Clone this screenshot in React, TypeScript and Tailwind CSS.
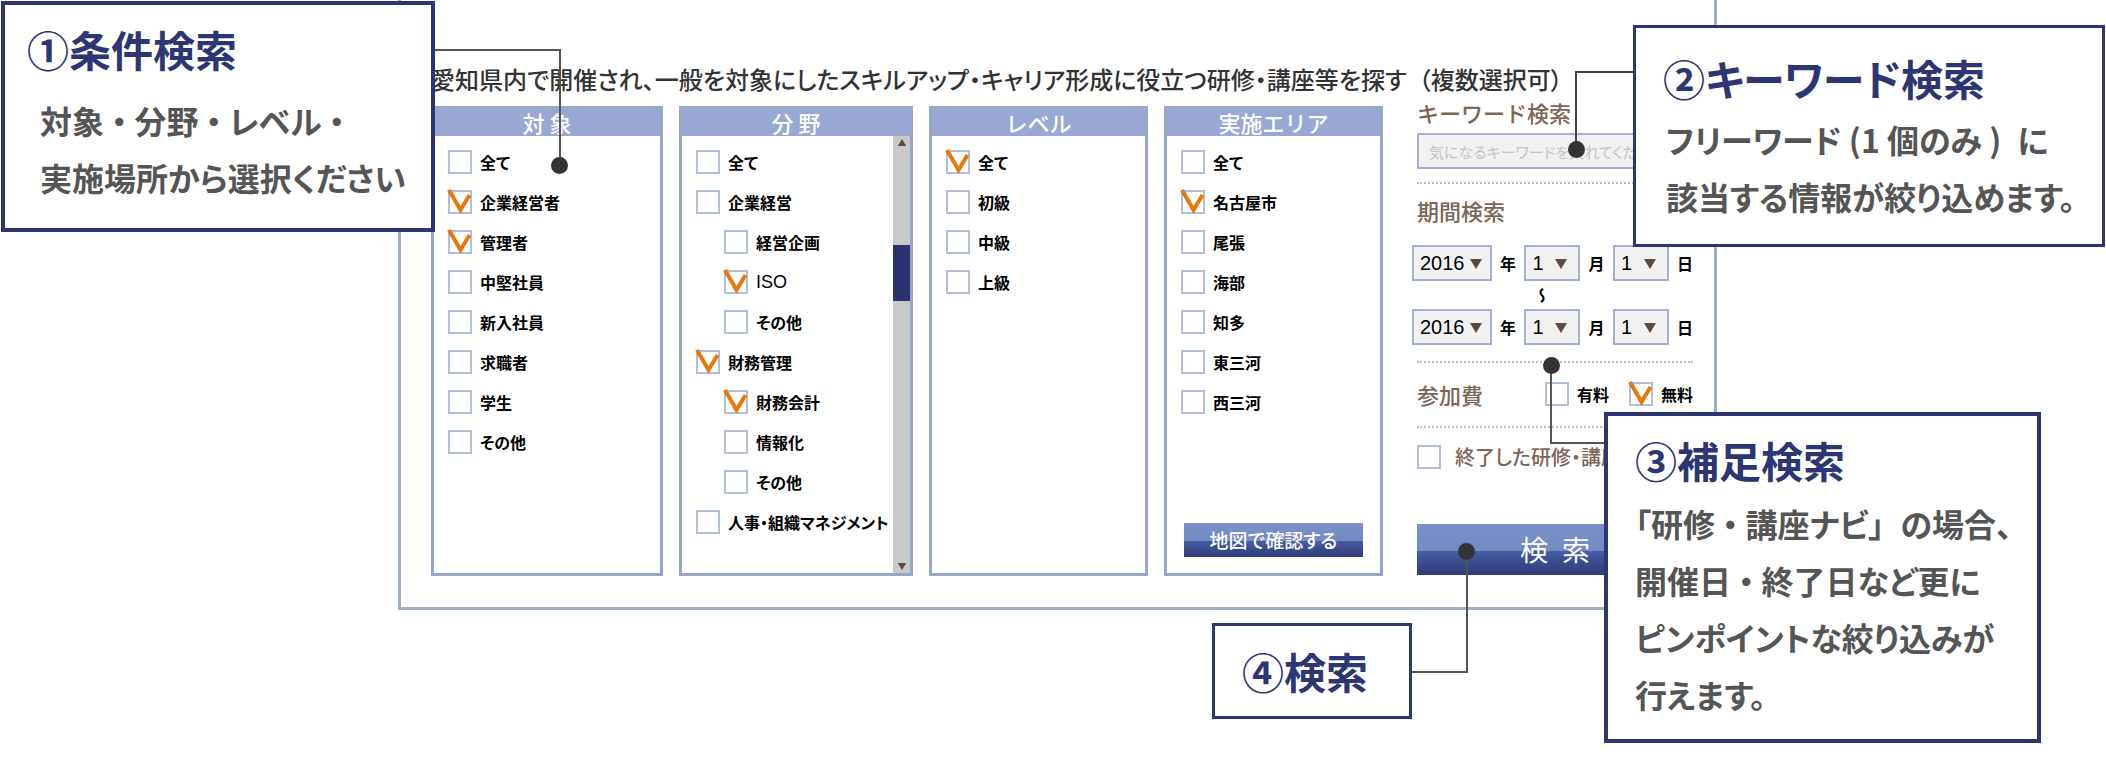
import React from "react";
import clsx from "clsx";

type Option = {
  label: string;
  checked?: boolean;
  child?: boolean;
};

const targets: Option[] = [
  { label: "全て" },
  { label: "企業経営者", checked: true },
  { label: "管理者", checked: true },
  { label: "中堅社員" },
  { label: "新入社員" },
  { label: "求職者" },
  { label: "学生" },
  { label: "その他" },
];

const fields: Option[] = [
  { label: "全て" },
  { label: "企業経営" },
  { label: "経営企画", child: true },
  { label: "ISO", child: true, checked: true },
  { label: "その他", child: true },
  { label: "財務管理", checked: true },
  { label: "財務会計", child: true, checked: true },
  { label: "情報化", child: true },
  { label: "その他", child: true },
  { label: "人事・組織マネジメント" },
];

const levels: Option[] = [
  { label: "全て", checked: true },
  { label: "初級" },
  { label: "中級" },
  { label: "上級" },
];

const areas: Option[] = [
  { label: "全て" },
  { label: "名古屋市", checked: true },
  { label: "尾張" },
  { label: "海部" },
  { label: "知多" },
  { label: "東三河" },
  { label: "西三河" },
];

const CheckItem: React.FC<{
  label: string;
  checked?: boolean;
  className?: string;
}> = ({ label, checked, className }) => (
  <label className={clsx("flex items-center whitespace-nowrap", className)}>
    <span className="relative block size-6 shrink-0">
      <input
        type="checkbox"
        defaultChecked={checked}
        className="peer block size-6 appearance-none border-2 border-[#b3bfda] bg-white"
      />
      <svg
        viewBox="0 0 24 24"
        className="pointer-events-none absolute inset-0 hidden size-6 overflow-visible peer-checked:block"
        fill="none"
        stroke="#e8780c"
        strokeWidth="4"
      >
        <path d="M1 0 L12.5 20 L21.5 5" />
      </svg>
    </span>
    {label}
  </label>
);

const OptionList: React.FC<{ options: Option[] }> = ({ options }) => (
  <ul className="min-w-0 pt-[6px] pl-[14px] text-[16px] font-bold text-black">
    {options.map((option, index) => (
      <li key={index} className={clsx("flex h-10 items-center", option.child && "pl-7")}>
        <CheckItem
          label={option.label}
          checked={option.checked}
          className={clsx("gap-2", option.label === "ISO" && "font-['Liberation_Sans'] text-[18px] font-normal")}
        />
      </li>
    ))}
  </ul>
);

const Column: React.FC<{ title: string; children: React.ReactNode }> = ({ title, children }) => (
  <section className="flex h-[470px] min-w-0 flex-col border-3 border-[#98a7c8] bg-white">
    <h2 className="h-[27px] shrink-0 bg-[#98a7d4] text-center text-[22px] leading-[27px] font-medium text-white [font-feature-settings:normal]">
      {title}
    </h2>
    {children}
  </section>
);

const Triangle: React.FC<{ up?: boolean; className?: string }> = ({ up, className }) => (
  <svg viewBox="0 0 12 10" className={className} fill="#5c4a42">
    <path d={up ? "M0 10 L6 0 L12 10 Z" : "M0 0 L12 0 L6 10 Z"} />
  </svg>
);

const DateSelect: React.FC<{ name: string; value: string; unit: string; wide?: boolean }> = ({
  name,
  value,
  unit,
  wide,
}) => (
  <label className="flex items-center gap-2 text-[16px] font-bold text-black">
    <span className={clsx("relative block", wide ? "w-20" : "w-14")}>
      <select
        name={name}
        defaultValue={value}
        className="block h-9 w-full appearance-none border-2 border-[#a3b0d0] bg-[#f1f1f1] pl-[6px] font-['Liberation_Sans'] text-[20px] font-normal"
      >
        <option>{value}</option>
      </select>
      <Triangle
        className={clsx("pointer-events-none absolute top-[14px] h-[10px] w-3", wide ? "right-[10px]" : "right-[13px]")}
      />
    </span>
    {unit}
  </label>
);

const DateRow: React.FC<{ name: string }> = ({ name }) => (
  <div className="-ml-[5px] flex justify-between">
    <DateSelect name={`${name}-year`} value="2016" unit="年" wide />
    <DateSelect name={`${name}-month`} value="1" unit="月" />
    <DateSelect name={`${name}-day`} value="1" unit="日" />
  </div>
);

const Divider: React.FC<{ className?: string }> = ({ className }) => (
  <hr className={clsx("border-t-2 border-dotted border-[#bdbdbd]", className)} />
);

const Callout: React.FC<{ title: string; className?: string; children?: React.ReactNode }> = ({
  title,
  className,
  children,
}) => (
  <aside className={clsx("absolute border-[#2e3573] bg-white", className)}>
    <h3 className="text-[42px] leading-[60px] font-bold whitespace-nowrap text-[#2e3573]">{title}</h3>
    {children}
  </aside>
);

const Dot: React.FC<{ className?: string }> = ({ className }) => (
  <span className={clsx("absolute size-[17px] rounded-full bg-[#333]", className)} />
);

const buttonFill =
  "bg-[linear-gradient(to_bottom,#7a90c9_0%,#748ac2_52%,#445ca4_54%,#323976_100%)] text-white";

const calloutText = "text-[32px] leading-[57px] font-bold whitespace-nowrap text-[#555]";

const App: React.FC = () => {
  return (
    <div className="relative min-h-screen overflow-hidden bg-white font-['Noto_Sans_CJK_JP',sans-serif] [font-feature-settings:'palt']">
      <main className="mr-[389px] ml-[398px] border-3 border-t-0 border-[#a0adca] pt-[61px] pr-[21px] pb-[31px] pl-[30px]">
        <h1 className="text-[24px] leading-9 font-medium whitespace-nowrap text-[#333]">
          愛知県内で開催され、一般を対象にしたスキルアップ・キャリア形成に役立つ研修・講座等を探す&ensp;（複数選択可）
        </h1>

        <form className="flex gap-[34px]" onSubmit={(e) => e.preventDefault()}>
          <div className="grid min-w-0 flex-1 grid-cols-[minmax(0,232fr)_minmax(0,234fr)_minmax(0,219fr)_minmax(0,219fr)] gap-4 pt-[9px]">
            <Column title="対 象">
              <OptionList options={targets} />
            </Column>

            <Column title="分 野">
              <div className="flex flex-1 justify-between">
                <OptionList options={fields} />
                <div className="relative flex w-[17px] shrink-0 flex-col items-center justify-between bg-[#c9c9c9] py-[3px]">
                  <Triangle up className="h-[7px] w-3" />
                  <span className="absolute top-[109px] h-14 w-[17px] bg-[#2c3270]" />
                  <Triangle className="h-[7px] w-3" />
                </div>
              </div>
            </Column>

            <Column title="レベル">
              <OptionList options={levels} />
            </Column>

            <Column title="実施エリア">
              <OptionList options={areas} />
              <button
                type="button"
                className={clsx("mx-[17px] mt-auto mb-4 h-[34px] text-[19px] leading-[34px] font-medium", buttonFill)}
              >
                地図で確認する
              </button>
            </Column>
          </div>

          <div className="w-[276px] shrink-0 text-[22px] text-[#7b6657]">
            <label
              htmlFor="keyword"
              className="block leading-[30px] font-medium [font-feature-settings:normal]"
            >
              キーワード検索
            </label>
            <input
              id="keyword"
              type="text"
              placeholder="気になるキーワードを入れてください"
              className="mt-[6px] block h-9 w-full border-2 border-[#a3b0d0] bg-[#f1f1f1] px-[10px] text-[15px] placeholder:text-[#c4c4c4]"
            />
            <Divider className="mt-[13px]" />

            <h2 className="mt-[11px] leading-[30px] font-medium [font-feature-settings:normal]">期間検索</h2>
            <div className="mt-5">
              <DateRow name="from" />
              <div className="flex h-7 items-center justify-center text-[16px] font-bold text-black">
                <span className="mr-[26px] [writing-mode:vertical-rl]">〜</span>
              </div>
              <DateRow name="to" />
            </div>
            <Divider className="mt-4" />

            <fieldset className="mt-[19px] flex h-6 items-center justify-between">
              <legend className="float-left leading-6 font-medium">参加費</legend>
              <div className="ml-auto flex gap-5 text-[16px] font-bold text-black">
                <CheckItem label="有料" className="gap-2" />
                <CheckItem label="無料" checked className="gap-2" />
              </div>
            </fieldset>
            <Divider className="mt-5" />

            <CheckItem
              label="終了した研修・講座も表示"
              className="mt-[17px] h-6 gap-[14px] text-[20px] leading-6 font-medium"
            />
            <button
              type="submit"
              className={clsx("mt-[55px] block h-[51px] w-full text-[28px] leading-[51px]", buttonFill)}
            >
              検&ensp;索
            </button>
          </div>
        </form>
      </main>

      {/* connector lines */}
      <div className="absolute top-[49px] left-[434px] h-[116px] w-[127px] border-t-2 border-r-2 border-[#555]">
        <Dot className="-right-[9px] -bottom-[9px]" />
      </div>
      <div className="absolute top-[71px] right-[472px] h-[78px] w-[59px] border-t-2 border-l-2 border-[#444]">
        <Dot className="-bottom-[9px] -left-[9px]" />
      </div>
      <div className="absolute top-[366px] right-[501px] h-[78px] w-[55px] border-b-2 border-l-2 border-[#555]">
        <Dot className="-top-[9px] -left-[9px]" />
      </div>
      <div className="absolute top-[552px] right-[638px] h-[121px] w-[57px] border-r-2 border-b-2 border-[#555]">
        <Dot className="-top-[9px] -right-[9px]" />
      </div>

      <Callout title="①条件検索" className="top-px left-px h-[231px] w-[434px] border-4 pt-[14px] pl-[22px]">
        <p className={clsx("mt-[13px] pl-[13px]", calloutText)}>
          対象 ・ 分野 ・ レベル ・<br />
          実施場所から選択ください
        </p>
      </Callout>

      <Callout title="②キーワード検索" className="top-[25px] right-px h-[222px] w-[472px] border-3 pt-[20px] pl-[27px]">
        <p className={clsx("mt-[3px] pl-[3px]", calloutText)}>
          フリーワード (1 個のみ )&ensp;に<br />
          該当する情報が絞り込めます。
        </p>
      </Callout>

      <Callout title="③補足検索" className="top-[412px] right-[65px] h-[331px] w-[437px] border-4 pt-[14px] pl-[27px]">
        <p className={clsx("mt-[5px]", calloutText)}>
          「研修 ・ 講座ナビ」&ensp;の場合、<br />
          開催日 ・ 終了日など更に<br />
          ピンポイントな絞り込みが<br />
          行えます。
        </p>
      </Callout>

      <Callout title="④検索" className="top-[623px] right-[694px] h-[96px] w-[200px] border-3 pt-[15px] pl-[27px]" />
    </div>
  );
};

export default App;
